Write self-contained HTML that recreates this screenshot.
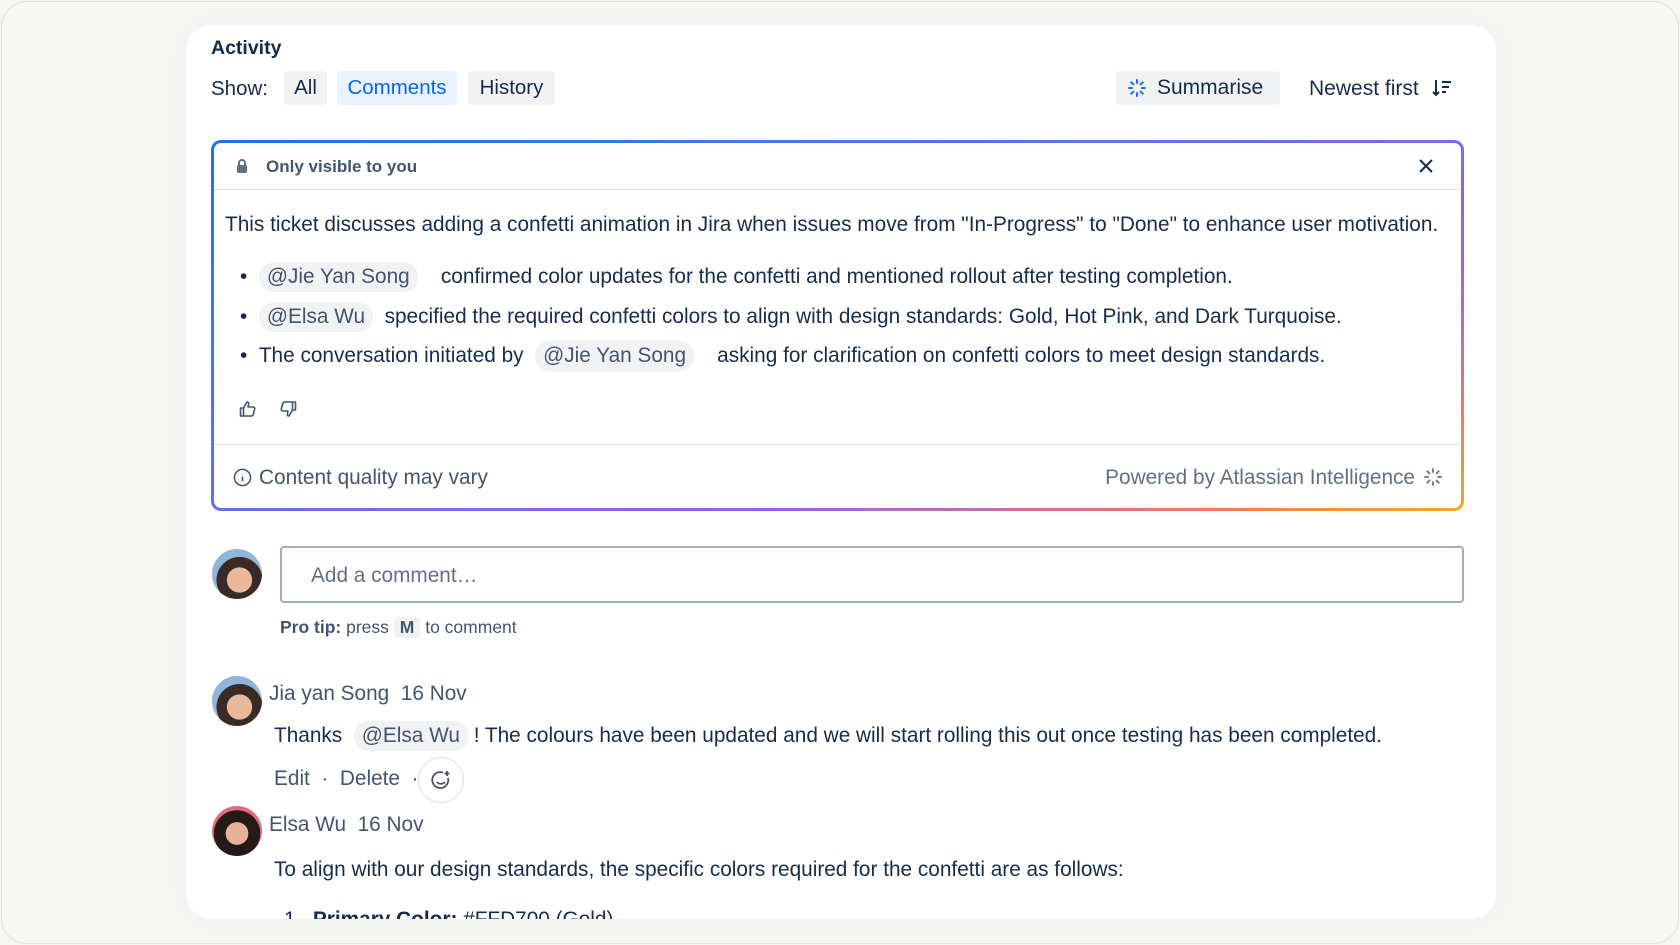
<!DOCTYPE html>
<html><head><meta charset="utf-8"><style>
*{box-sizing:border-box;margin:0;padding:0}
body{width:1680px;height:945px;background:#f6f6f4;font-family:"Liberation Sans",sans-serif;color:#172b4d;position:relative;overflow:hidden}
.frame{position:absolute;left:1px;top:1px;width:1678px;height:943px;border:1px solid #e2e2e0;border-radius:26px;background:#f7f7f5}
.card{position:absolute;left:186px;top:25px;width:1310px;height:894px;background:#fff;border-radius:26px;overflow:hidden;box-shadow:0 0 30px rgba(0,0,0,.04)}
.a{position:absolute;white-space:nowrap}
.btn{position:absolute;top:71px;height:34px;border-radius:4px;background:#f1f2f4;font-size:20.5px;line-height:34px;text-align:center;color:#172b4d}
.ai{position:absolute;left:211px;top:140px;width:1253px;height:371px;border-radius:10px;padding:3px;background:linear-gradient(160deg,#1d6ff0 0%,#3b7af0 25%,#a25cf0 70%,#f07a5a 88%,#f5a623 100%)}
.ai-in{width:100%;height:100%;background:#fff;border-radius:7px;position:relative}
.m{display:inline-block;background:#f1f2f4;border-radius:14px;padding:0 8px;color:#44546f;line-height:30px}
.t{font-size:20.8px;color:#172b4d}
.av{position:absolute;width:50px;height:50px;border-radius:50%}
</style></head><body>
<div class="frame"></div>
<div class="card"></div>
<div class="a" style="left:211px;top:37px;font-size:19.5px;font-weight:bold">Activity</div>
<div class="a" style="left:211px;top:77px;font-size:20.5px">Show:</div>
<div class="btn" style="left:284px;width:43px">All</div>
<div class="btn" style="left:337px;width:120px;background:#e9f2ff;color:#0c66e4">Comments</div>
<div class="btn" style="left:468px;width:87px">History</div>
<div class="btn" style="left:1116px;width:164px;text-align:left;padding-left:41px;font-size:21px">Summarise</div>
<svg class="a" style="left:1128px;top:79px" width="18" height="18" viewBox="0 0 18 18" stroke="#1d6ff0" stroke-width="2" stroke-linecap="round"><path d="M9 1v3M9 14v3M1 9h3M14 9h3M3.3 3.3l2.1 2.1M12.6 12.6l2.1 2.1M3.3 14.7l2.1-2.1M12.6 5.4l2.1-2.1"/></svg>
<div class="a" style="left:1309px;top:77px;font-size:21px">Newest first</div>
<svg class="a" style="left:1432px;top:79px" width="20" height="18" viewBox="0 0 20 18" stroke="#172b4d" stroke-width="2" fill="none"><path d="M4 1v15M1 13l3 3 3-3M10 3h9M10 8h7M10 13h4"/></svg>

<div class="ai"><div class="ai-in"></div></div>
<div class="a" style="left:214px;top:189px;width:1247px;height:1px;background:#dcdfe4"></div>
<svg class="a" style="left:236px;top:158px" width="12" height="16" viewBox="0 0 12 16"><path d="M3 7V5a3 3 0 016 0v2" stroke="#626f86" stroke-width="2" fill="none"/><rect x="1" y="7" width="10" height="8" rx="1.5" fill="#626f86"/></svg>
<div class="a" style="left:266px;top:157px;font-size:17px;font-weight:bold;color:#44546f">Only visible to you</div>
<svg class="a" style="left:1418px;top:158px" width="16" height="16" viewBox="0 0 16 16" stroke="#172b4d" stroke-width="2"><path d="M2 2l12 12M14 2L2 14"/></svg>
<div class="a t" style="left:225px;top:213px">This ticket discusses adding a confetti animation in Jira when issues move from "In-Progress" to "Done" to enhance user motivation.</div>
<div class="a t" style="left:240px;top:262px">•&nbsp;&nbsp;<span class="m">@Jie Yan Song</span>&nbsp;&nbsp;&nbsp; confirmed color updates for the confetti and mentioned rollout after testing completion.</div>
<div class="a t" style="left:240px;top:302px">•&nbsp;&nbsp;<span class="m">@Elsa Wu</span>&nbsp; specified the required confetti colors to align with design standards: Gold, Hot Pink, and Dark Turquoise.</div>
<div class="a t" style="left:240px;top:341px">•&nbsp;&nbsp;The conversation initiated by&nbsp; <span class="m">@Jie Yan Song</span>&nbsp;&nbsp;&nbsp; asking for clarification on confetti colors to meet design standards.</div>
<svg class="a" style="left:239px;top:400px" width="18" height="18" viewBox="0 0 18 18" fill="none" stroke="#44546f" stroke-width="1.6" stroke-linejoin="round"><path d="M1.5 8h3v8h-3zM4.5 8l3.5-6c1.5 0 2 1 1.5 2.5L9 7h5c1.2 0 2 1 1.7 2l-1.5 5.5c-.3 1-1 1.5-2 1.5H4.5"/></svg>
<svg class="a" style="left:279px;top:400px" width="18" height="18" viewBox="0 0 18 18" fill="none" stroke="#44546f" stroke-width="1.6" stroke-linejoin="round"><path d="M13.5 10h3V2h-3zM13.5 10L10 16c-1.5 0-2-1-1.5-2.5L9 11H4c-1.2 0-2-1-1.7-2l1.5-5.5C4.1 2.5 4.8 2 5.8 2h7.7"/></svg>
<div class="a" style="left:214px;top:444px;width:1247px;height:1px;background:#dcdfe4"></div>
<svg class="a" style="left:233px;top:468px" width="19" height="19" viewBox="0 0 20 20" fill="none" stroke="#44546f" stroke-width="1.6"><circle cx="10" cy="10" r="8.5"/><path d="M10 9v5M10 6v.5"/></svg>
<div class="a" style="left:259px;top:466px;font-size:20.8px;color:#44546f">Content quality may vary</div>
<div class="a" style="right:265px;top:466px;font-size:20.8px;color:#626f86">Powered by Atlassian Intelligence</div>
<svg class="a" style="left:1424px;top:468px" width="18" height="18" viewBox="0 0 18 18" stroke="#626f86" stroke-width="1.8" stroke-linecap="round"><path d="M9 1v3M9 14v3M1 9h3M14 9h3M3.3 3.3l2.1 2.1M12.6 12.6l2.1 2.1M3.3 14.7l2.1-2.1M12.6 5.4l2.1-2.1"/></svg>

<div class="av" style="left:212px;top:549px;background:radial-gradient(circle at 55% 62%,#e8b89a 0 30%,#3a2a25 31% 55%,#8fb6d8 56%)"></div>
<div class="a" style="left:280px;top:546px;width:1184px;height:57px;border:2px solid #a5adba;border-radius:4px"></div>
<div class="a" style="left:311px;top:564px;font-size:20.8px;color:#626f86">Add a comment…</div>
<div class="a" style="left:280px;top:617px;font-size:17.5px;color:#44546f"><b>Pro tip:</b> press <span style="display:inline-block;background:#f1f2f4;border-radius:3px;padding:0 6px;font-weight:bold">M</span> to comment</div>

<div class="av" style="left:212px;top:676px;background:radial-gradient(circle at 55% 62%,#e8b89a 0 30%,#3a2a25 31% 55%,#8fb6d8 56%)"></div>
<div class="a" style="left:269px;top:682px;font-size:20.8px;color:#44546f">Jia yan Song&nbsp;&nbsp;16 Nov</div>
<div class="a t" style="left:274px;top:721px">Thanks&nbsp; <span class="m">@Elsa Wu</span>&nbsp;! The colours have been updated and we will start rolling this out once testing has been completed.</div>
<div class="a" style="left:274px;top:767px;font-size:20.8px;color:#44546f">Edit &nbsp;·&nbsp; Delete &nbsp;·</div>
<div class="a" style="left:418px;top:757px;width:46px;height:46px;border:1.5px solid #dcdfe4;border-radius:50%"></div>
<svg class="a" style="left:431px;top:770px" width="20" height="20" viewBox="0 0 20 20" fill="none" stroke="#44546f" stroke-width="1.8"><path d="M17 8a8 8 0 11-5-5.5"/><path d="M6 12c2 2.5 6 2.5 8 0M7 8h.1M12 8h.1M16 1v5M13.5 3.5h5"/></svg>

<div class="av" style="left:212px;top:806px;background:radial-gradient(circle at 50% 55%,#e6b196 0 30%,#241a18 31% 62%,#e46a80 63%)"></div>
<div class="a" style="left:269px;top:813px;font-size:20.8px;color:#44546f">Elsa Wu&nbsp;&nbsp;16 Nov</div>
<div class="a t" style="left:274px;top:858px">To align with our design standards, the specific colors required for the confetti are as follows:</div>
<div class="a t" style="left:284px;top:908px;height:11px;overflow:hidden;line-height:24px">1.&nbsp; <b>Primary Color:</b> #FFD700 (Gold)</div>
</body></html>
